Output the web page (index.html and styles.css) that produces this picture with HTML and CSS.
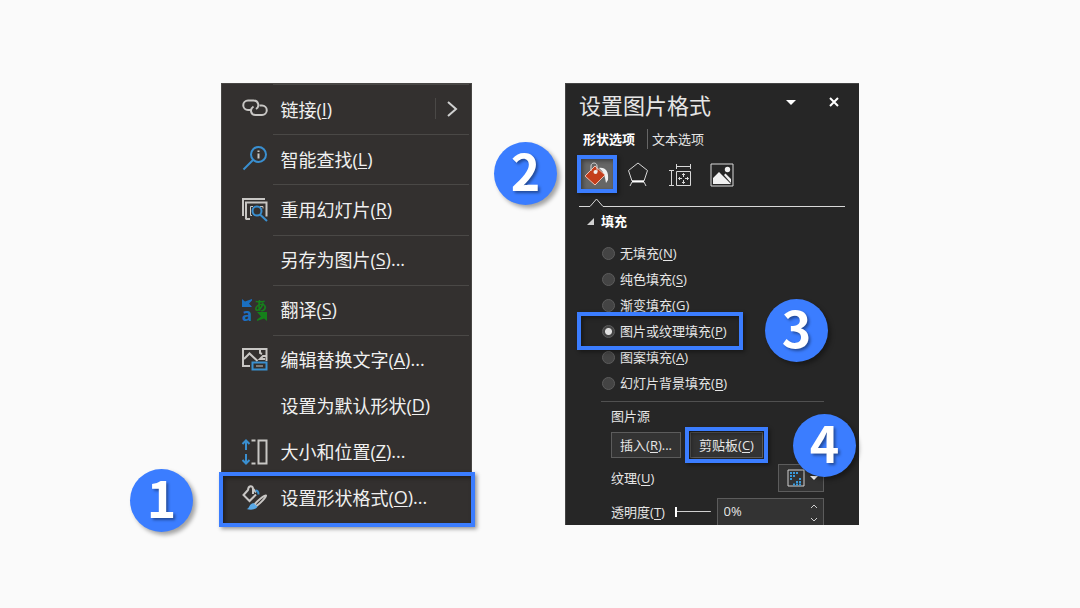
FILE: index.html
```html
<!DOCTYPE html>
<html lang="zh-CN">
<head>
<meta charset="utf-8">
<title>设置图片格式</title>
<link rel="stylesheet" href="styles.css">
</head>
<body>

<main class="steps">

<!-- context menu -->
<ul class="menu">
<li class="line">
<button type="button">
<svg class="icon" viewBox="0 0 26 26"><path d="M10 14H6a4.700 4.700 0 0 1 0-9.500h5.500c5 0 6.500 6 2.500 8.500"/><path d="M17.500 9.500H20a4.700 4.700 0 0 1 0 9.500h-6.500c-5 0-6-6-2-8.500"/></svg>
<span class="label">链接(<u>I</u>)
<svg class="arrow" viewBox="0 0 26 22"><path class="bar" d="M1.500 0v21"/><path d="M14 4l8 7-8 7"/></svg>
</span>
</button>
</li>
<li class="line">
<button type="button">
<svg class="icon" viewBox="0 0 26 26"><g class="blue"><circle cx="16.500" cy="8.500" r="7.500"/><path d="M11 14L1.500 23.500"/></g><path d="M16.500 7.500v5M16.500 4.500v1.500"/></svg>
<span class="label">智能查找(<u>L</u>)</span>
</button>
</li>
<li class="line">
<button type="button">
<svg class="icon" viewBox="0 0 26 26"><path d="M1 19V2h22M4 22V5.500h20.500v14M3.500 22H8"/><path class="thin" d="M11 9.500H8.500v9H10M18 9.500h3v2"/><g class="blue"><circle cx="15" cy="14" r="4.500"/><path d="M18 17.500l7 6.500"/></g></svg>
<span class="label">重用幻灯片(<u>R</u>)</span>
</button>
</li>
<li class="line">
<button type="button">
<svg class="icon" viewBox="0 0 26 26"></svg>
<span class="label">另存为图片(<u>S</u>)...</span>
</button>
</li>
<li class="line">
<button type="button">
<svg class="icon" viewBox="0 0 26 26"><path class="fill-blue" d="M0 2l3 2.500L10 2v1.500L7 6.500l3 3.500H0z"/><text class="fill-blue" x="0" y="24" font-size="17">a</text><text class="fill-green" x="12" y="13" font-size="13">あ</text><path class="fill-green" d="M15 15h10v9l-3-2.500-7 2.500v-1.500l4-3z"/></svg>
<span class="label">翻译(<u>S</u>)</span>
</button>
</li>
<li class="line last">
<button type="button">
<svg class="icon" viewBox="0 0 26 26"><path d="M8 20H1V3h23.500v12M2 13l5.500-5.500 8 7.500M18 3v4l2 1M24 10h-3l-3 3h5"/><path class="blue" d="M10.500 16.500h14v7h-14z"/><path class="thin" d="M14 20h7"/></svg>
<span class="label">编辑替换文字(<u>A</u>)...</span>
</button>
</li>
<li>
<button type="button">
<svg class="icon" viewBox="0 0 26 26"></svg>
<span class="label">设置为默认形状(<u>D</u>)</span>
</button>
</li>
<li>
<button type="button">
<svg class="icon" viewBox="0 0 26 26"><path class="blue" d="M4 2v9M4 15v9M.500 5L4 1.500 7.500 5M.500 21L4 24.500 7.500 21"/><path d="M9.500 1.500h4M9.500 24.500h4M16.500 1.500h8v23h-8z"/></svg>
<span class="label">大小和位置(<u>Z</u>)...</span>
</button>
</li>
<li class="marked mark-row">
<button type="button">
<svg class="icon" viewBox="0 0 26 26"><path d="M6 5L1.500 10l6 6L14 9.500M6 5.500C6 0 11 0 11 4v5M11 3.500l3 4"/><path class="blue" d="M13.500 5.500c2 0 3 1.500 3 4"/><path d="M24 10.500c-1-1-9.500 6-11.500 9l2 1.500c3-2 10.500-9.500 9.500-10.500z"/><path class="fill-sky" d="M4.500 24c3 0 2.500-5.500 7-6l4 3.500c-1.500 3-6 4-11 2.500z"/></svg>
<span class="label">设置形状格式(<u>O</u>)...</span>
</button>
<b class="badge badge-1">1</b>
</li>
</ul>

<!-- format pane -->
<section class="pane">
<header>
<h1>设置图片格式</h1>
<button type="button" class="head-btn" aria-label="选项"><svg width="10" height="5"><path d="M0 0h10L5 5z"/></svg></button>
<button type="button" class="head-btn" aria-label="关闭"><svg width="12" height="12"><path class="cross" d="M2 2l8 8M10 2l-8 8"/></svg></button>
</header>

<nav class="tabs">
<a href="#shape" class="active">形状选项</a>
<a href="#text">文本选项</a>
</nav>

<div class="tools">
<div class="marked mark-tool">
<button type="button" class="active" aria-label="填充与线条">
<svg width="30" height="30"><path class="paint" d="M18 9c6-1 10 3 9 12l-2 3c-1-6-2-11-6-14z"/><path class="bucket" d="M4 17L14 7l10 9-10 10z"/><path d="M10 12V7c0-4 6-4 6 0v6"/><circle class="paint" cx="14.500" cy="13" r="2"/></svg>
</button>
<b class="badge badge-2">2</b>
</div>
<button type="button" class="tool" aria-label="效果"><svg width="24" height="28"><path d="M12 2l9.500 7.500L18 20H6L2.500 9.500z"/><path class="thick" d="M6 20.500h12"/><path d="M6 21l-2 4M18 21l2 4"/></svg></button>
<button type="button" class="tool" aria-label="大小与属性"><svg width="24" height="28"><path d="M8.500 5.500h14M8.500 3v5M22.500 3v5M3.500 9.500v15M1 9.500h5M1 24.500h5M8.500 10.500h14v14h-14z"/><path d="M15.500 12.500v3.500M15.500 19v3.500M10.500 17.500H14M17 17.500h3.500M14 14l1.500-1.500L17 14M14 21l1.500 1.500L17 21M12 16l-1.500 1.500L12 19M19 16l1.500 1.500L19 19"/></svg></button>
<button type="button" class="tool" aria-label="图片"><svg width="24" height="28"><path d="M1 3h22v22H1z"/><path class="paint" d="M3 23v-6l6-6 12 12zM14 14l1.500-1.500L21 18v4z"/><circle class="paint" cx="17.500" cy="8.500" r="2.700"/></svg></button>
</div>

<div class="rule"><svg width="28" height="10"><path d="M0 9.500h11L17.500 2 24 9.500h4"/></svg></div>

<h2>填充</h2>

<form>
<div class="fills">
<label><input type="radio" name="fill">无填充(<u>N</u>)</label>
<label><input type="radio" name="fill">纯色填充(<u>S</u>)</label>
<label><input type="radio" name="fill">渐变填充(<u>G</u>)</label>
<label class="marked mark-fill"><input type="radio" name="fill" checked>图片或纹理填充(<u>P</u>)<b class="badge badge-3">3</b></label>
<label><input type="radio" name="fill">图案填充(<u>A</u>)</label>
<label><input type="radio" name="fill">幻灯片背景填充(<u>B</u>)</label>
</div>

<div class="source">
<p>图片源</p>
<div class="row">
<button type="button" class="btn">插入(<u>R</u>)...</button>
<div class="marked mark-btn">
<button type="button" class="btn">剪贴板(<u>C</u>)</button>
<b class="badge badge-4">4</b>
</div>
</div>
<div class="row">
<label for="texture">纹理(<u>U</u>)</label>
<button type="button" class="texture" id="texture">
<svg width="18" height="18"><path class="frame" d="M1 1h16v16H1z"/><path class="dots" d="M3 4h8M3 7h5M3 10h2M12 10h3M9 13h6M6 15.500h9"/></svg>
<svg width="8" height="4"><path class="down" d="M0 0h8L4 4z"/></svg>
</button>
</div>
<div class="row">
<label for="opacity">透明度(<u>T</u>)</label>
<input type="range" id="opacity" min="0" max="100" value="0">
<div class="spin">
<input type="text" value="0%" aria-label="透明度">
<div class="spin-btns">
<button type="button" aria-label="增加"><svg width="8" height="5"><path d="M1 4l3-3 3 3"/></svg></button>
<button type="button" aria-label="减少"><svg width="8" height="5"><path d="M1 1l3 3 3-3"/></svg></button>
</div>
</div>
</div>
</div>
</form>
</section>

</main>

</body>
</html>
```

FILE: styles.css
```css
* {
box-sizing: border-box;
}
body {
margin: 0;
min-height: 100vh;
display: flex;
align-items: center;
justify-content: center;
background-color: #fafafa;
font-family: "Open Sans", "Noto Sans CJK SC", sans-serif;
}
button, input {
font: inherit;
color: inherit;
}
button {
border: none;
padding: 0;
background: none;
}
svg {
display: block;
fill: none;
overflow: visible;
}
u {
text-underline-offset: 2px;
text-decoration-thickness: 1px;
}
.steps {
width: 59%;
min-width: 630px;
display: flex;
gap: 93px;
}

/* menu on the left */
.menu {
flex: 251;
display: flex;
flex-direction: column;
margin: 0;
padding: 1px 3px 4px 21px;
list-style: none;
background-color: #33302f;
box-shadow: inset 0 0 0 1px #484644;
color: #f0f0f0;
font-size: 18px;
}
.menu li {
display: flex;
height: 46px;
}
.menu .line {
flex: 1;
height: auto;
}
.menu .last {
flex: none;
height: 48px;
}
.menu button {
flex: 1;
display: flex;
align-items: center;
gap: 5px;
text-align: left;
}
.icon {
width: 26px;
height: 26px;
stroke: #c8c6c4;
stroke-width: 2;
}
.icon text {
font-family: "Noto Sans", "Noto Sans CJK JP", sans-serif;
font-weight: bold;
}
.icon .thin {
stroke-width: 1;
}
.icon .blue {
stroke: #3a8fd0;
}
.icon .fill-blue {
fill: #1b6fc0;
stroke: none;
}
.icon .fill-sky {
fill: #5aa9e6;
stroke: none;
}
.icon .fill-green {
fill: #15801a;
stroke: none;
}
.label {
flex: 1;
align-self: stretch;
display: flex;
align-items: center;
padding: 0 0 2px 7px;
}
.line .label {
border-top: 1px solid #4a4846;
}
.arrow {
width: 26px;
height: 22px;
margin-left: auto;
margin-right: 9px;
stroke: #d0d0d0;
stroke-width: 2;
}
.arrow .bar {
stroke: #4a4846;
stroke-width: 1;
}

/* blue frames and step numbers */
.marked {
position: relative;
}
.marked::after {
content: "";
position: absolute;
border: 4px solid #3b7dff;
box-shadow: 2px 2px 4px rgba(0,0,0,0.4), inset 2px 2px 4px rgba(0,0,0,0.4);
pointer-events: none;
}
.mark-row::after {
inset: -3px -6px -6px -23px;
}
.mark-tool::after {
inset: 0;
}
.mark-fill::after {
inset: -6px -16px -6px -25px;
}
.mark-btn::after {
inset: -5px;
}
.badge {
position: absolute;
z-index: 1;
width: 63px;
height: 63px;
border-radius: 50%;
background-color: #3b7dff;
box-shadow: 3px 3px 4px rgba(0,0,0,0.35);
color: #fff;
font: bold 50px/54px "Noto Sans CJK SC", sans-serif;
text-align: center;
text-shadow: 2px 2px 3px rgba(0,0,0,0.4);
}
.badge-1 {
right: 276px;
top: -6px;
}
.badge-2 {
right: 60px;
top: -13px;
}
.badge-3 {
left: 163px;
top: -19px;
}
.badge-4 {
left: 103px;
top: -18px;
}

/* pane on the right */
.pane {
flex: 294;
background-color: #262626;
box-shadow: inset 1px 1px #444;
padding: 8px 14px 0;
color: #e6e6e6;
font-size: 13px;
line-height: 20px;
}
.pane header {
display: flex;
align-items: center;
gap: 32px;
padding-right: 5px;
}
h1 {
margin: 0 auto 0 0;
font-size: 22px;
font-weight: normal;
line-height: 28px;
}
.head-btn {
padding-bottom: 6px;
}
.head-btn path {
fill: #fff;
}
.head-btn .cross {
stroke: #fff;
stroke-width: 2;
}
.tabs {
display: flex;
margin-top: 10px;
padding-left: 4px;
}
.tabs a {
color: inherit;
text-decoration: none;
}
.tabs .active {
margin-right: 12px;
font-weight: bold;
color: #fff;
}
.tabs a + a {
border-left: 1px solid #666;
padding-left: 4px;
}
.tools {
display: flex;
align-items: center;
gap: 18px;
height: 38px;
margin: 6px 0 4px -2px;
stroke: #d8d8d8;
}
.tool {
padding-top: 2px;
}
.mark-tool {
margin-right: -9px;
padding: 4px;
}
.mark-tool .active {
display: block;
width: 32px;
background-color: #666;
}
.tools .paint {
fill: #f0f0f0;
stroke: none;
}
.tools .bucket {
fill: #c43e1c;
stroke: #f0c0b0;
}
.tools .thick {
stroke-width: 2;
stroke: #fff;
}
.rule {
display: flex;
stroke: #d8d8d8;
}
.rule::after {
content: "";
flex: 1;
border-bottom: 1px solid #d8d8d8;
}
h2 {
display: flex;
align-items: center;
gap: 7px;
margin: 4px 0 9px 8px;
font-size: 13px;
line-height: 20px;
color: #fff;
}
h2::before {
content: "";
border-left: 7px solid transparent;
border-bottom: 7px solid #d0d0d0;
}
.fills {
display: flex;
flex-direction: column;
align-items: flex-start;
padding-left: 23px;
}
.fills label {
display: flex;
align-items: center;
height: 26px;
}
.fills input {
appearance: none;
width: 13px;
height: 13px;
margin: 0 5px 0 0;
border: 1px solid #5c5c5c;
border-radius: 50%;
background-color: #444;
}
.fills input:checked {
background: radial-gradient(circle, #e0e0e0 3px, #444 4px);
}
.source {
margin: 5px 21px 0 22px;
padding: 4px 0 0 10px;
border-top: 1px solid #505050;
}
.source p {
margin: 0 0 6px;
}
.row {
display: flex;
align-items: center;
height: 26px;
margin-bottom: 7px;
}
.row:last-child {
height: 27px;
margin-bottom: 0;
}
.btn {
display: block;
height: 26px;
padding: 0 8px;
border: 1px solid #5c5c5c;
background-color: #333;
line-height: 22px;
}
.mark-btn {
margin-left: 9px;
}
.texture {
display: flex;
align-items: center;
gap: 5px;
margin-left: auto;
height: 28px;
padding: 0 5px 0 8px;
border: 1px solid #5c5c5c;
background-color: #333;
}
.texture .frame {
stroke: #d0d0d0;
}
.texture .dots {
stroke: #3a9bdc;
stroke-width: 2;
stroke-dasharray: 2 1;
}
.texture .down {
fill: #fff;
}
input[type="range"] {
appearance: none;
flex: 1;
width: 30px;
height: 10px;
margin: 0 6px 0 10px;
background: linear-gradient(#d0d0d0, #d0d0d0) center / 100% 1px no-repeat;
}
input[type="range"]::-webkit-slider-thumb {
appearance: none;
width: 2px;
height: 10px;
background-color: #fff;
}
.spin {
display: flex;
width: 107px;
height: 27px;
border: 1px solid #5c5c5c;
border-bottom: none;
background-color: #333;
}
.spin input {
flex: 1;
width: 50px;
padding: 0 6px 2px;
border: none;
background: none;
}
.spin-btns {
display: flex;
flex-direction: column;
justify-content: space-between;
padding: 5px 5px 3px;
stroke: #d0d0d0;
}
.spin-btns button {
display: block;
}
```
